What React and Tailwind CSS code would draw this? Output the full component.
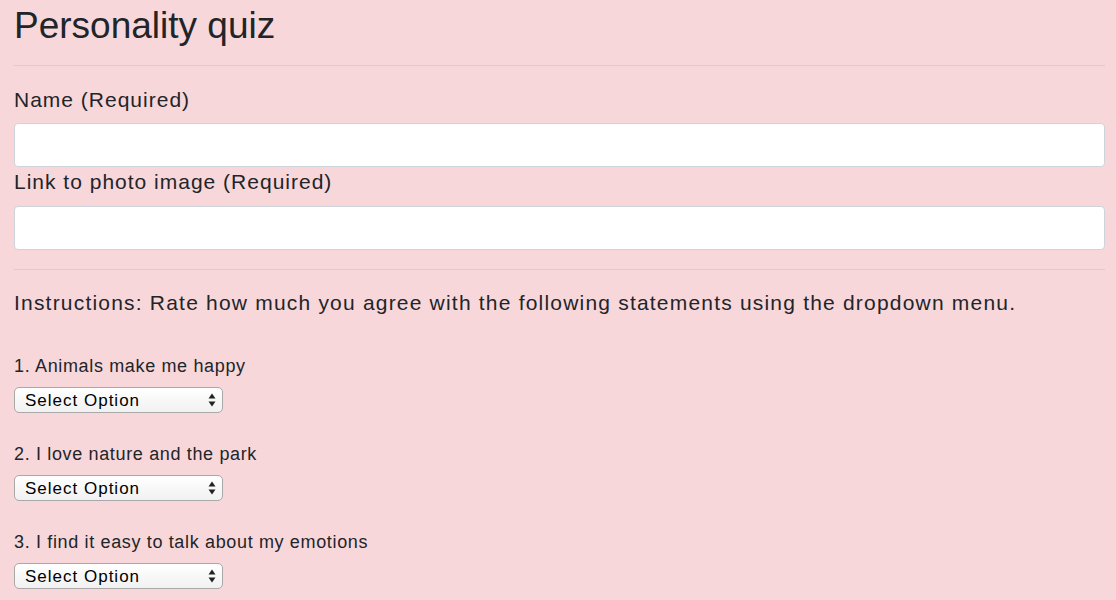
import React from "react";

const questions = [
  "1. Animals make me happy",
  "2. I love nature and the park",
  "3. I find it easy to talk about my emotions",
];

const SelectBox = () => (
  <div className="relative w-[209px] h-[26px]">
    <select className="appearance-none w-full h-full rounded-[5px] border border-[#a9a9a9] bg-gradient-to-b from-white to-[#f1f1f1] pl-[10px] text-[17px] tracking-[1px] leading-none text-black">
      <option>Select Option</option>
      <option>Strongly Disagree</option>
      <option>Disagree</option>
      <option>Neutral</option>
      <option>Agree</option>
      <option>Strongly Agree</option>
    </select>
    {/* double arrow */}
    <svg className="pointer-events-none absolute right-[7px] top-[6px]" width="8" height="14" viewBox="0 0 8 14">
      <path d="M4 0.5 L7.5 5.5 L0.5 5.5 Z" fill="#222" />
      <path d="M0.5 8.5 L7.5 8.5 L4 13.5 Z" fill="#222" />
    </svg>
  </div>
);

export default function App() {
  return (
    <div className="min-h-[600px] bg-[#f8d7da] pl-[14px] pr-[11px] text-[#212529] font-['Liberation_Sans',Arial,sans-serif]">
      <h1 className="pt-[4px] text-[37px] leading-[44px] font-normal">Personality quiz</h1>
      <hr className="mt-[17px] border-t border-[#e9c5c8]" />
      <form className="flex flex-col">
        <label className="mt-[19px] text-[21px] tracking-[1px] leading-[30px]">Name (Required)</label>
        <input className="mt-[8px] h-[44px] w-full rounded-[4px] border border-[#ced4da] bg-white px-3" />
        <label className="text-[21px] tracking-[1px] leading-[30px]">Link to photo image (Required)</label>
        <input className="mt-[9px] h-[44px] w-full rounded-[4px] border border-[#ced4da] bg-white px-3" />
        <hr className="mt-[19px] border-t border-[#e9c5c8]" />
        <p className="mt-[18px] text-[21px] tracking-[1.2px] leading-[30px]">
          Instructions: Rate how much you agree with the following statements using the dropdown menu.
        </p>
        <div className="mt-[36px] flex flex-col gap-[29px]">
          {questions.map((q) => (
            <div key={q} className="flex flex-col gap-[9px]">
              <span className="text-[18px] tracking-[0.65px] leading-[24px]">{q}</span>
              <SelectBox />
            </div>
          ))}
        </div>
      </form>
    </div>
  );
}
